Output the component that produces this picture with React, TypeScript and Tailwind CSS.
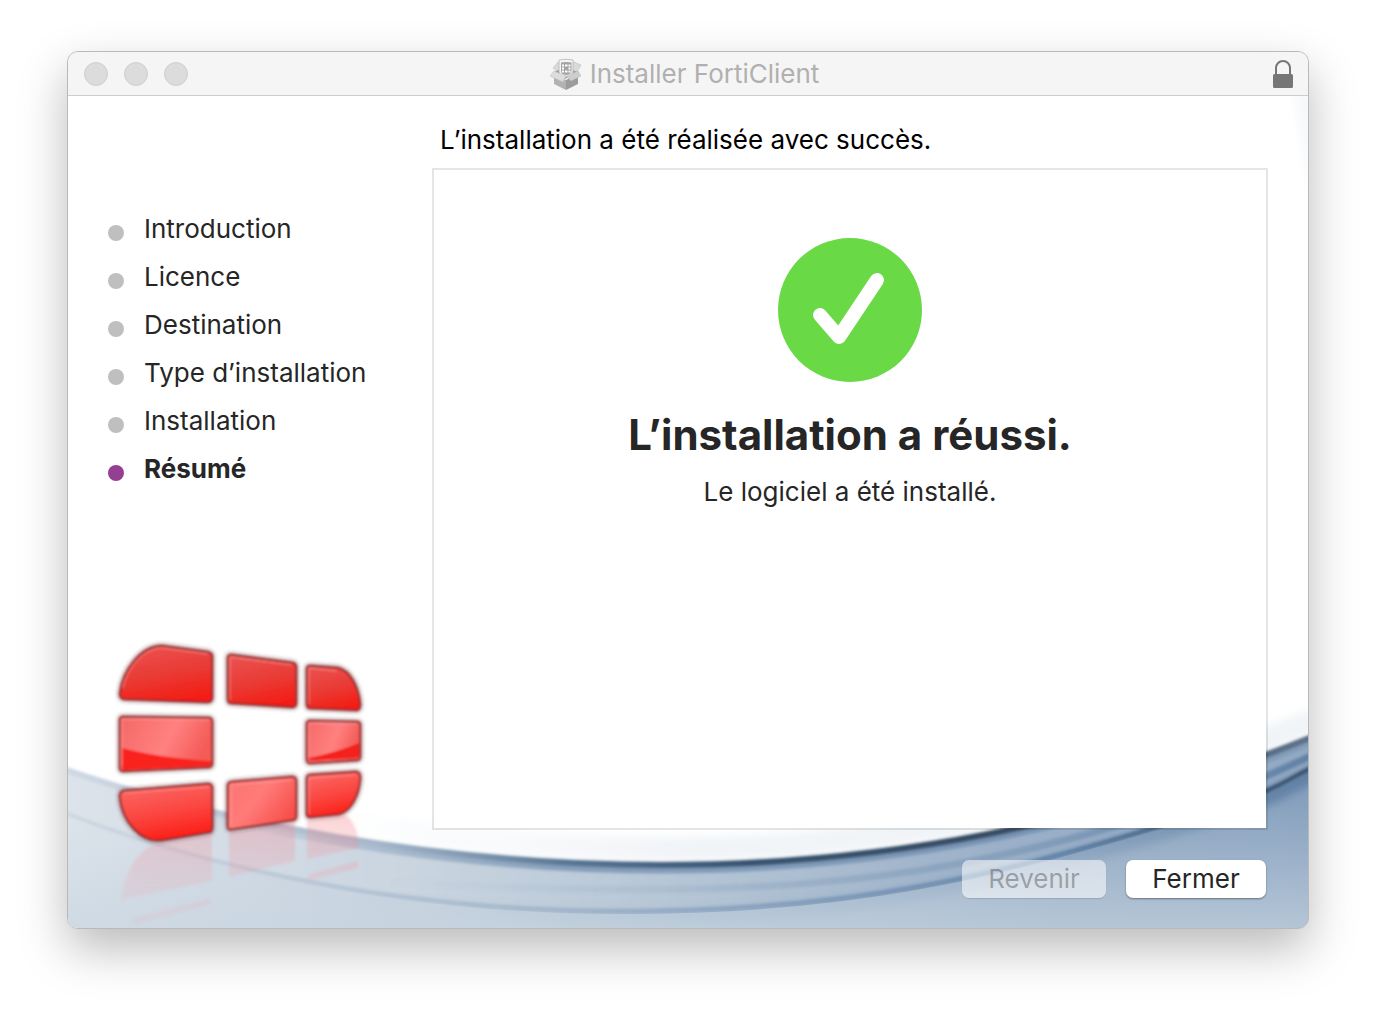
const steps = [
  { label: "Introduction" },
  { label: "Licence" },
  { label: "Destination" },
  { label: "Type d’installation" },
  { label: "Installation" },
  { label: "Résumé", current: true },
];

function PackageIcon() {
  return (
    <svg viewBox="0 0 32 32" className="size-8" aria-hidden="true">
      <path d="M8 4 3 10l6 5 6-4z" fill="#dadada" stroke="#bdbdbd" strokeWidth=".6" />
      <path d="m24 4 7 3-4 7-9-3z" fill="#dadada" stroke="#bdbdbd" strokeWidth=".6" />
      <path d="m4 14 12-5 11 5-12 7z" fill="#9c9c9c" />
      <path d="M9 2q7-1.500 14 0v12q-1 4-7 5-6-1-7-5z" fill="#f4f4f4" stroke="#b4b4b4" strokeWidth=".8" />
      <path d="M11 4.500q5-1 10.500 0V13q-.5 3.500-5.500 4-5-.5-5-4z" fill="#a2a2a2" />
      <path d="M12 6.500h2v2h-2zM15 6.500h2.500v2H15zM18.500 6.500h2v2h-2zM12 9.500h2v2h-2zM18.500 9.500h2v2h-2zM12 12.500h2v2h-2zM15 12.500h2.500v2H15zM18.500 12.500h2v2h-2z" fill="#fff" />
      <path d="m4 17 12 5v10L4 26z" fill="#b2b2b2" />
      <path d="m28 16-12 6v10l12-6z" fill="#9c9c9c" />
      <path d="m4 13 12 5-3 6-13-6z" fill="#dcdcdc" stroke="#bcbcbc" strokeWidth=".5" />
      <path d="m28 13-12 5 5 5 10-5z" fill="#cecece" stroke="#b4b4b4" strokeWidth=".5" />
    </svg>
  );
}

function LockIcon() {
  return (
    <svg viewBox="0 0 20 28" className="h-7 w-5">
      <path d="M3 15V8a7 7 0 0 1 14 0v7" fill="none" stroke="#767676" strokeWidth="2" />
      <rect y="14" width="20" height="14" rx="1.500" fill="#767676" />
    </svg>
  );
}

function CheckIcon() {
  return (
    <svg viewBox="0 0 144 144" className="size-36" aria-hidden="true">
      <circle cx="72" cy="72" r="72" fill="#69d945" />
      <path
        d="M42 77 61 99 99 42"
        fill="none"
        stroke="#fff"
        strokeWidth="14"
        strokeLinecap="round"
        strokeLinejoin="round"
      />
    </svg>
  );
}

const tiles = [
  { d: "M120 694C123 669 142 646 162 646L207 652Q212 653 212 656V698Q212 702 207 702L124 699Q120 698 120 694Z", fill: "url(#red-top)" },
  { d: "M231 655 293 663Q296 664 296 667V703Q296 707 292 707L231 703Q228 703 228 699V658Q228 655 231 655Z", fill: "url(#red-top)" },
  { d: "M310 666 338 668C350 671 358 686 360 704Q360 710 357 710L310 708Q307 708 307 704V669Q307 666 310 666Z", fill: "url(#red-top)" },
  { d: "M123 717 209 718Q212 718 212 722V763Q212 767 209 767L123 771Q120 771 120 768V720Q120 717 123 717Z", fill: "url(#red-mid)" },
  { d: "M310 721 357 722Q360 722 360 725V756Q360 760 357 760L310 763Q307 763 307 759V724Q307 721 310 721Z", fill: "url(#red-mid)" },
  { d: "M124 791 208 784Q212 784 212 788V828Q212 832 209 832L162 840C142 843 122 822 120 796Q120 792 124 791Z", fill: "url(#red-low)" },
  { d: "M232 782 292 777Q296 777 296 781V816Q296 820 292 820L232 829Q228 830 228 827V786Q228 782 232 782Z", fill: "url(#red-pale)" },
  { d: "M310 775 356 772Q360 772 360 778C359 795 351 811 339 814L310 817Q307 817 307 814V779Q307 775 310 775Z", fill: "url(#red-low)" },
];

function Logo() {
  return (
    <g>
      <g fill="url(#mirror)" filter="url(#soft)">
        <path d="M121 900C124 870 140 847 160 843L212 834V881Z" />
        <path d="M229 832 295 822V861L229 877Z" />
        <path d="M307 820 345 815C354 820 359 834 359 848L307 859Z" />
        <path d="M308 874 358 861V868L308 881Z" />
        <path d="M133 918 210 898V905L133 925Z" />
      </g>
      {tiles.map((tile) => (
        <path key={tile.d} d={tile.d} fill="#6b1010" stroke="#6b2626" strokeWidth="4" opacity=".65" filter="url(#glow)" />
      ))}
      <g filter="url(#gloss)">
        {tiles.map((tile) => (
          <path key={tile.d} d={tile.d} fill={tile.fill} stroke="#a3262a" strokeWidth="1.500" />
        ))}
        <path d="M122 748Q160 758 211 761V763Q211 766 208 766L124 770Q122 770 122 767Z" fill="#fa231b" />
        <path d="M309 758Q338 752 359 743V755Q359 758 356 758L311 761Q309 761 309 758Z" fill="#f3231c" />
        <g fill="none" stroke="#ffb3ae" strokeWidth="1" opacity=".6">
          <path d="M123 688C127 668 144 648 162 648L208 654" />
          <path d="M230 700V657L292 665" />
          <path d="M309 704V668L337 671" />
          <path d="M122 766V719L209 720" />
          <path d="M309 757V723L357 724" />
          <path d="M124 793 209 787" />
          <path d="M231 826V785L292 780" />
          <path d="M309 814V778L356 775" />
        </g>
      </g>
    </g>
  );
}

function Backdrop() {
  return (
    <svg
      viewBox="68 96 1240 832"
      preserveAspectRatio="xMidYMax slice"
      className="absolute inset-0 size-full"
      aria-hidden="true"
    >
      <defs>
        <linearGradient id="water" x1="68" x2="1308" y1="0" y2="0" gradientUnits="userSpaceOnUse">
          <stop offset="0" stopColor="#dce3ea" />
          <stop offset=".27" stopColor="#cad5e0" />
          <stop offset=".5" stopColor="#b5c5d5" />
          <stop offset=".75" stopColor="#9bb0c8" />
          <stop offset="1" stopColor="#93a9c3" />
        </linearGradient>
        <linearGradient id="deep" x1="68" x2="1308" y1="0" y2="0" gradientUnits="userSpaceOnUse">
          <stop offset="0" stopColor="#dfe5eb" />
          <stop offset=".3" stopColor="#c3cfdb" />
          <stop offset=".5" stopColor="#a9bbcf" />
          <stop offset=".8" stopColor="#8ba3bf" />
          <stop offset="1" stopColor="#86a0bd" />
        </linearGradient>
        <linearGradient id="edge" x1="68" x2="1308" y1="0" y2="0" gradientUnits="userSpaceOnUse">
          <stop offset="0" stopColor="#cfd9e4" />
          <stop offset=".25" stopColor="#a3b6ca" />
          <stop offset=".4" stopColor="#577594" />
          <stop offset=".55" stopColor="#34506d" />
          <stop offset=".75" stopColor="#34495f" />
          <stop offset="1" stopColor="#5c7188" />
        </linearGradient>
        <linearGradient id="line" x1="68" x2="1308" y1="0" y2="0" gradientUnits="userSpaceOnUse">
          <stop offset="0" stopColor="#ccd6e1" />
          <stop offset=".4" stopColor="#9fb3c9" />
          <stop offset=".8" stopColor="#5f82a8" />
          <stop offset=".95" stopColor="#37506b" />
          <stop offset="1" stopColor="#37506b" />
        </linearGradient>
        <linearGradient id="ripple" x1="68" x2="1308" y1="0" y2="0" gradientUnits="userSpaceOnUse">
          <stop offset=".25" stopColor="#6686aa" stopOpacity="0" />
          <stop offset=".5" stopColor="#6686aa" stopOpacity=".15" />
          <stop offset=".75" stopColor="#6686aa" stopOpacity=".4" />
          <stop offset="1" stopColor="#56789f" stopOpacity=".8" />
        </linearGradient>
        <linearGradient id="slope" x1="68" x2="1308" y1="0" y2="0" gradientUnits="userSpaceOnUse">
          <stop offset=".1" stopColor="#5f80a5" stopOpacity="0" />
          <stop offset=".4" stopColor="#5f80a5" stopOpacity=".6" />
          <stop offset=".8" stopColor="#5f80a5" stopOpacity=".6" />
          <stop offset="1" stopColor="#5f80a5" stopOpacity=".3" />
        </linearGradient>
        <linearGradient id="mist" x1="68" x2="1308" y1="0" y2="0" gradientUnits="userSpaceOnUse">
          <stop offset=".2" stopColor="#f1f4f7" stopOpacity="0" />
          <stop offset=".5" stopColor="#f1f4f7" />
          <stop offset=".8" stopColor="#f1f4f7" />
        </linearGradient>
        <linearGradient id="haze" x1="0" x2="0" y1="800" y2="928" gradientUnits="userSpaceOnUse">
          <stop offset="0" stopColor="#c8d5e1" stopOpacity="0" />
          <stop offset="1" stopColor="#c8d5e1" stopOpacity=".7" />
        </linearGradient>
        <linearGradient id="mirror" x1="0" x2="0" y1="815" y2="925" gradientUnits="userSpaceOnUse">
          <stop offset="0" stopColor="#f5888f" stopOpacity=".36" />
          <stop offset=".6" stopColor="#f5939b" stopOpacity=".18" />
          <stop offset="1" stopColor="#f5939b" stopOpacity=".1" />
        </linearGradient>
        <linearGradient id="red-top" x1=".3" y1="0" x2=".6" y2="1">
          <stop offset="0" stopColor="#ea504e" />
          <stop offset=".5" stopColor="#e93b35" />
          <stop offset="1" stopColor="#f41d14" />
        </linearGradient>
        <linearGradient id="red-mid" x1="0" y1="0" x2="1" y2=".3">
          <stop offset="0" stopColor="#f56866" />
          <stop offset=".6" stopColor="#ff8180" />
          <stop offset="1" stopColor="#f45c58" />
        </linearGradient>
        <linearGradient id="red-low" x1=".3" y1="0" x2=".6" y2="1">
          <stop offset="0" stopColor="#fb6763" />
          <stop offset=".5" stopColor="#fb4742" />
          <stop offset="1" stopColor="#fb1d15" />
        </linearGradient>
        <linearGradient id="red-pale" x1="0" y1="0" x2="1" y2=".6">
          <stop offset="0" stopColor="#fb7471" />
          <stop offset=".5" stopColor="#ff7b79" />
          <stop offset="1" stopColor="#f8504b" />
        </linearGradient>
        <filter id="glow" x="-20%" y="-20%" width="140%" height="140%">
          <feGaussianBlur stdDeviation="2" />
        </filter>
        <filter id="gloss" filterUnits="userSpaceOnUse" x="0" y="0" width="1400" height="1000">
          <feGaussianBlur stdDeviation=".9" />
        </filter>
        <filter id="soft" filterUnits="userSpaceOnUse" x="0" y="0" width="1400" height="1000">
          <feGaussianBlur stdDeviation="1.400" />
        </filter>
        <filter id="softer" filterUnits="userSpaceOnUse" x="0" y="0" width="1400" height="1000">
          <feGaussianBlur stdDeviation="4" />
        </filter>
      </defs>

      <rect x="68" y="96" width="1240" height="832" fill="#fff" />
      <path d="M1294 90 1312 90V210Z" fill="#f6f8fb" filter="url(#softer)" />

      {/* water surface */}
      <path
        d="M60 752C220 807 440 849 660 849S1090 811 1320 718"
        fill="none"
        stroke="url(#mist)"
        strokeWidth="24"
        filter="url(#softer)"
      />
      <path
        d="M60 767C220 822 440 864 660 864S1090 826 1320 733V940H60Z"
        fill="url(#water)"
        filter="url(#soft)"
      />
      <path
        d="M60 772C220 827 440 869 660 869S1090 831 1320 738"
        fill="none"
        stroke="url(#slope)"
        strokeWidth="9"
        filter="url(#soft)"
      />
      <path
        d="M60 768C220 823 440 865 660 865S1090 827 1320 734"
        fill="none"
        stroke="url(#edge)"
        strokeWidth="6"
        filter="url(#soft)"
      />
      <path
        d="M360 880C760 905 920 878 1080 836S1260 778 1320 752"
        fill="none"
        stroke="url(#ripple)"
        strokeWidth="7"
        filter="url(#soft)"
      />
      <path
        d="M60 810C180 858 380 910 620 910S1000 872 1150 828 1270 785 1320 763V940H60Z"
        fill="url(#deep)"
        filter="url(#soft)"
      />
      <path
        d="M60 818C180 866 380 918 620 918S1000 880 1150 836 1270 793 1320 771"
        fill="none"
        stroke="url(#ripple)"
        strokeWidth="16"
        filter="url(#softer)"
      />
      <path
        d="M60 811C180 859 380 911 620 911S1000 873 1150 829 1270 786 1320 764"
        fill="none"
        stroke="url(#line)"
        strokeWidth="4"
        filter="url(#soft)"
      />
      <path d="M60 814C180 862 380 914 620 914S1000 876 1150 832 1270 789 1320 767V940H60Z" fill="url(#haze)" />

      <Logo />
    </svg>
  );
}

export default function App() {
  return (
    <div className="min-h-screen bg-white px-[67px] pt-[51px] pb-20 font-[Inter,sans-serif] text-[#262626]">
      <main className="overflow-hidden rounded-[11px] border border-[#b9b9b9] bg-white shadow-[0_20px_48px_rgba(0,0,0,0.27)]">
        <header className="flex h-11 items-center justify-between border-b border-[#cdcdcd] bg-[#f5f5f5] pt-px pr-[15px] pl-4">
          <div className="flex flex-1 gap-4">
            <button type="button" aria-label="Fermer la fenêtre" className="size-6 rounded-full border border-[#cfcfcf] bg-[#dcdcdc]" />
            <button type="button" aria-label="Réduire" className="size-6 rounded-full border border-[#cfcfcf] bg-[#dcdcdc]" />
            <button type="button" aria-label="Agrandir" className="size-6 rounded-full border border-[#cfcfcf] bg-[#dcdcdc]" />
          </div>
          <h1 className="flex items-center gap-2 pr-2 text-[26px] leading-8 text-[#b0b0b0]">
            <PackageIcon />
            Installer FortiClient
          </h1>
          <div className="flex flex-1 justify-end">
            <button type="button" aria-label="Verrou">
              <LockIcon />
            </button>
          </div>
        </header>

        <div className="relative">
          <Backdrop />
          <div className="relative grid grid-cols-[364px_1fr] pr-10 pb-[30px]">
            <ol className="pt-[109px] pl-10 text-[26px] leading-8">
              {steps.map((step) => (
                <li
                  key={step.label}
                  aria-current={step.current ? "step" : undefined}
                  className={step.current ? "flex h-12 items-center gap-5 font-bold" : "flex h-12 items-center gap-5"}
                >
                  <span
                    className={
                      step.current
                        ? "mt-2 size-4 rounded-full bg-[#953f92]"
                        : "mt-2 size-4 rounded-full bg-[#bfbfbf]"
                    }
                  />
                  {step.label}
                </li>
              ))}
            </ol>

            <section className="pt-7">
              <p className="px-2 text-[26px] leading-8 text-black">L’installation a été réalisée avec succès.</p>

              <div className="mt-3 flex min-h-[662px] flex-col items-center border-2 border-black/10 bg-white bg-clip-padding pt-[68px]">
                <CheckIcon />
                <h2 className="mt-7 text-[42px] leading-[50px] font-bold">L’installation a réussi.</h2>
                <p className="mt-4 text-[26px] leading-8">Le logiciel a été installé.</p>
              </div>

              <div className="mt-[30px] flex justify-end gap-5 pr-0.5 text-[26px] leading-[38px]">
                <button type="button" disabled className="w-36 rounded-[7px] bg-white/55 text-[#262626]/35 shadow-[0_1px_1px_rgba(0,0,0,0.12)]">
                  Revenir
                </button>
                <button type="button" className="w-[140px] rounded-[7px] bg-white shadow-[0_1px_2px_rgba(0,0,0,0.4)]">
                  Fermer
                </button>
              </div>
            </section>
          </div>
        </div>
      </main>
    </div>
  );
}
